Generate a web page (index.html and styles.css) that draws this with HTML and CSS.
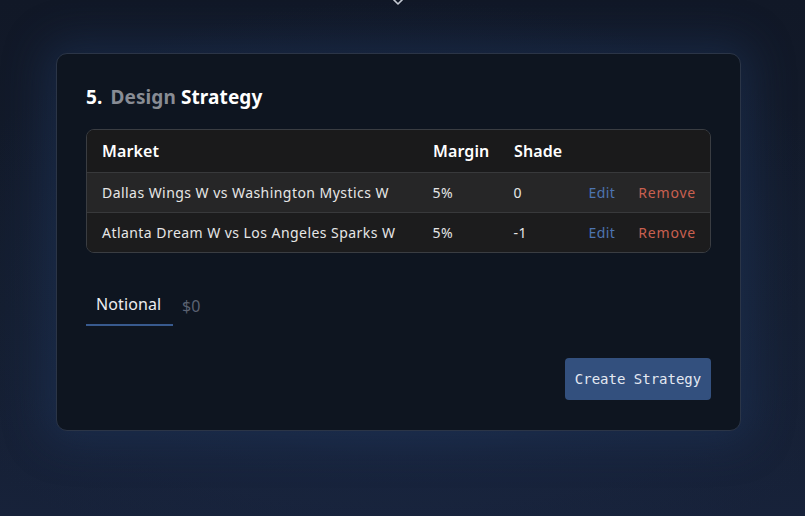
FILE: index.html
```html
<!DOCTYPE html>
<html>
<head>
<meta charset="utf-8">
<link rel="stylesheet" href="styles.css">
</head>
<body>
<div class="page">
  <div class="chevron">
    <svg width="14" height="8" viewBox="0 0 14 8"><path d="M2 -1 L7 4 L12 -1" fill="none" stroke="#c4c9d2" stroke-width="1.6" stroke-linecap="round" stroke-linejoin="round"/></svg>
  </div>
  <section class="card">
    <h2 class="title"><span class="num">5.</span> <span class="muted">Design</span> Strategy</h2>
    <div class="table">
      <div class="row head">
        <div class="c-market">Market</div>
        <div class="c-margin">Margin</div>
        <div class="c-shade">Shade</div>
        <div class="c-actions"></div>
      </div>
      <div class="row alt">
        <div class="c-market">Dallas Wings W vs Washington Mystics W</div>
        <div class="c-margin">5%</div>
        <div class="c-shade">0</div>
        <div class="c-actions"><span class="edit">Edit</span><span class="remove">Remove</span></div>
      </div>
      <div class="row last">
        <div class="c-market">Atlanta Dream W vs Los Angeles Sparks W</div>
        <div class="c-margin">5%</div>
        <div class="c-shade">-1</div>
        <div class="c-actions"><span class="edit">Edit</span><span class="remove">Remove</span></div>
      </div>
    </div>
    <div class="tabs">
      <div class="tab active">Notional</div>
      <div class="tab-value">$0</div>
    </div>
    <div class="actions">
      <button class="btn">Create Strategy</button>
    </div>
  </section>
</div>
</body>
</html>
```
FILE: styles.css
```css
* { box-sizing: border-box; }
html, body { margin: 0; padding: 0; }
body {
  width: 805px;
  height: 516px;
  overflow: hidden;
  background: #121a28;
  font-family: "Noto Sans", "Open Sans", sans-serif;
  color: #eef0f3;
}
.page {
  position: relative;
  height: 516px;
  padding: 53px 64px 0 56px;
  background:
    radial-gradient(ellipse 62% 58% at 50% 58%, rgba(34,54,92,0.6) 0%, rgba(26,40,68,0.4) 55%, rgba(18,26,40,0) 100%),
    linear-gradient(180deg, #111827 0%, #141d2e 60%, #17223a 100%);
}
.chevron {
  position: absolute;
  left: 391px;
  top: 0;
  width: 14px;
  height: 8px;
  line-height: 0;
}
.card {
  width: 685px;
  height: 378px;
  background: #0e1520;
  border: 1px solid #2b3547;
  border-radius: 11px;
  padding: 30px 29px 0 29px;
  box-shadow: 0 0 40px 12px rgba(30,55,95,0.45);
  display: flex;
  flex-direction: column;
}
.title {
  margin: 0;
  font-size: 19px;
  font-weight: 700;
  line-height: 26px;
  color: #ffffff;
  letter-spacing: 0.1px;
}
.title .num { margin-right: 3px; }
.title .muted { color: #888c94; }
.table {
  margin-top: 19px;
  border: 1px solid #3a3d42;
  border-radius: 8px;
  overflow: hidden;
  background: #1b1b1c;
}
.row {
  display: flex;
  align-items: center;
  padding: 0 14px 0 15px;
  height: 40px;
  font-size: 14px;
  letter-spacing: 0.45px;
  color: #e6e6e6;
  border-top: 1px solid #38393b;
}
.row.head {
  height: 42px;
  border-top: 0;
  font-size: 16px;
  font-weight: 600;
  letter-spacing: 0.1px;
  color: #ffffff;
  background: #1a1a1b;
}
.row.alt { background: #262627; }
.row.last { background: #1c1c1d; }
.c-market { width: 331px; }
.c-margin { width: 81px; }
.c-shade { width: 75px; }
.c-actions { flex: 1; display: flex; gap: 23px; }
.edit { color: #4d74b0; }
.remove { color: #c96050; letter-spacing: 0.8px; }
.tabs {
  margin-top: 37px;
  display: flex;
  align-items: center;
  height: 36px;
}
.tab {
  height: 36px;
  padding: 3px 10px 0 10px;
  width: 87px;
  font-size: 16px;
  letter-spacing: 0.1px;
  color: #ecedf0;
  border-bottom: 2px solid #385a8e;
}
.tab-value {
  padding: 0 0 4px 9px;
  font-size: 16px;
  color: #5b6272;
}
.actions {
  margin-top: 32px;
  display: flex;
  justify-content: flex-end;
}
.btn {
  width: 146px;
  height: 42px;
  border: 0;
  border-radius: 4px;
  background: #33507e;
  color: #e4e9f2;
  font-family: "DejaVu Sans Mono", "Liberation Mono", monospace;
  font-size: 14px;
  padding: 0;
}
```
